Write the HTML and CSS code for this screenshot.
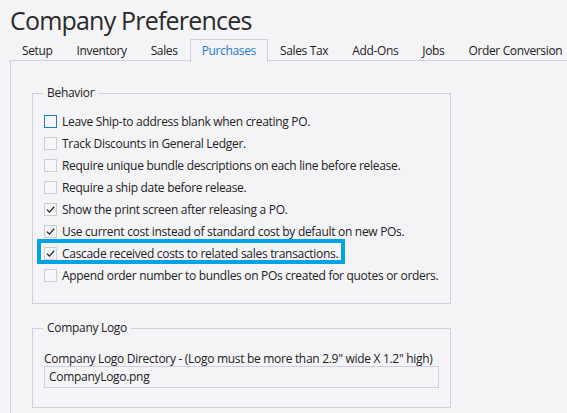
FILE: index.html
```html
<!DOCTYPE html>
<html lang="en">
<head>
    <meta charset="UTF-8">
    <title>Company Preferences</title>
    <link rel="stylesheet" href="styles.css">
</head>
<body>
    <h1 class="title">Company Preferences</h1>

    <div class="tabs">
        <div class="tab">Setup</div>
        <div class="tab">Inventory</div>
        <div class="tab">Sales</div>
        <div class="tab active">Purchases</div>
        <div class="tab">Sales Tax</div>
        <div class="tab">Add-Ons</div>
        <div class="tab">Jobs</div>
        <div class="tab">Order Conversion</div>
    </div>

    <div class="panel">
        <fieldset class="group behavior">
            <legend>Behavior</legend>
            <div class="row"><span class="box focus"></span>Leave Ship-to address blank when creating PO.</div>
            <div class="row"><span class="box"></span>Track Discounts in General Ledger.</div>
            <div class="row"><span class="box"></span>Require unique bundle descriptions on each line before release.</div>
            <div class="row"><span class="box"></span>Require a ship date before release.</div>
            <div class="row"><span class="box"><svg viewBox="0 0 11 11"><path d="M2 5.6 L4.4 8.1 L9.2 2.8" /></svg></span>Show the print screen after releasing a PO.</div>
            <div class="row"><span class="box"><svg viewBox="0 0 11 11"><path d="M2 5.6 L4.4 8.1 L9.2 2.8" /></svg></span>Use current cost instead of standard cost by default on new POs.</div>
            <div class="row highlight"><span class="box"><svg viewBox="0 0 11 11"><path d="M2 5.6 L4.4 8.1 L9.2 2.8" /></svg></span>Cascade received costs to related sales transactions.</div>
            <div class="row"><span class="box"></span>Append order number to bundles on POs created for quotes or orders.</div>
        </fieldset>

        <fieldset class="group logo">
            <legend>Company Logo</legend>
            <div class="field-label">Company Logo Directory - (Logo must be more than 2.9" wide X 1.2" high)</div>
            <div class="textbox">CompanyLogo.png</div>
        </fieldset>
    </div>
</body>
</html>
```

FILE: styles.css
```css
body {
    margin: 0;
    padding: 0 0 0 10px;
    background: #f4f4f6;
    color: #222;
    font-family: "Open Sans", "Noto Sans", sans-serif;
    font-size: 12px;
    overflow: hidden;
    height: 413px;
}
.title {
    margin: 0;
    padding: 5px 0 0 0;
    height: 34px;
    font-size: 25px;
    font-weight: 400;
    line-height: 30px;
    color: #2a2a2a;
    letter-spacing: -0.8px;
}
.tabs {
    display: flex;
    height: 22px;
    white-space: nowrap;
}
.tab {
    padding: 0 11px;
    line-height: 22px;
    letter-spacing: -0.35px;
    border: 1px solid transparent;
    border-bottom: none;
}
.tab.active {
    color: #1f78d1;
    border-color: #cfd0de;
    background: #f4f4f6;
    position: relative;
    z-index: 1;
    height: 22px;
}
.panel {
    border-top: 1px solid #cfd0de;
    border-left: 1px solid #cfd0de;
    margin-top: -1px;
    padding: 24px 0 0 21px;
    height: 328px;
    overflow: hidden;
}
.group {
    width: 419px;
    box-sizing: border-box;
    margin: 0;
    border: 1px solid #cfd0de;
    padding: 0 11px;
    letter-spacing: -0.3px;
}
.group legend {
    margin-left: -1px;
    padding: 0 4px;
    line-height: 16px;
}
.behavior {
    padding-top: 9px;
    padding-bottom: 17px;
}
.row {
    display: flex;
    align-items: center;
    gap: 5px;
    height: 22px;
    position: relative;
}
.box {
    width: 13px;
    height: 13px;
    box-sizing: border-box;
    border: 1px solid #cdcdd6;
    background: #f6f6f8;
    flex: none;
}
.box.focus {
    border-color: #1f78d1;
}
.box svg {
    display: block;
    width: 11px;
    height: 11px;
    fill: none;
    stroke: #222;
    stroke-width: 1.3;
}
.highlight::after {
    content: "";
    position: absolute;
    left: -7px;
    top: -3px;
    width: 308px;
    height: 25px;
    box-sizing: border-box;
    border: 4px solid #00a3e6;
}
.logo {
    margin-top: 16px;
    padding-top: 15px;
    padding-bottom: 19px;
}
.field-label {
    line-height: 15px;
}
.textbox {
    width: 395px;
    height: 22px;
    box-sizing: border-box;
    border: 1px solid #cfd0de;
    padding-left: 4px;
    line-height: 20px;
}
```
